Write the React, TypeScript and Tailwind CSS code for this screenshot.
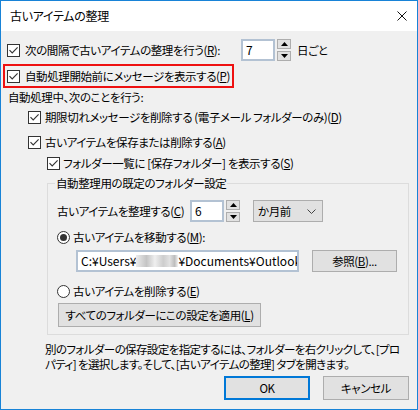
import React from "react";

const Check = () => (
  <span className="w-[13px] h-[13px] border border-[#333333] bg-white flex items-center justify-center shrink-0">
    <svg width="11" height="11" viewBox="0 0 11 11">
      <path d="M1.5 5.2 L4.2 8 L9.6 2.4" fill="none" stroke="#333333" strokeWidth="1.1" />
    </svg>
  </span>
);

const Radio = ({ on }: { on?: boolean }) => (
  <span className="w-[13px] h-[13px] rounded-full border border-[#333333] bg-white flex items-center justify-center shrink-0">
    {on ? <span className="w-[7px] h-[7px] rounded-full bg-[#333333]" /> : null}
  </span>
);

const Spin = () => (
  <div className="flex flex-col gap-[2px] ml-[2px]">
    <div className="w-[14px] h-[10px] border border-[#adadad] bg-[#e1e1e1] flex items-center justify-center">
      <svg width="7" height="4" viewBox="0 0 7 4">
        <path d="M0 4 L3.5 0 L7 4Z" fill="#000" />
      </svg>
    </div>
    <div className="w-[14px] h-[10px] border border-[#adadad] bg-[#e1e1e1] flex items-center justify-center">
      <svg width="7" height="4" viewBox="0 0 7 4">
        <path d="M0 0 L3.5 4 L7 0Z" fill="#000" />
      </svg>
    </div>
  </div>
);

const NumBox = ({ v }: { v: string }) => (
  <div className="w-[34px] h-[22px] border-2 border-[#b3c2d3] bg-white flex items-center pl-[3px] shrink-0 text-[12px]">
    {v}
  </div>
);

export default function App() {
  return (
    <div className="w-[418px] h-[410px] border border-[#1883d7] bg-[#f0f0f0] flex flex-col text-[11.5px] tracking-[-0.4px] leading-[16px] text-black font-['Noto_Sans_CJK_JP',sans-serif] [font-feature-settings:'palt'] overflow-hidden">
      {/* title bar */}
      <div className="h-[30px] bg-white flex items-center justify-between pl-[9px] pr-[10px] shrink-0">
        <span className="text-[12px] tracking-[-0.3px]">古いアイテムの整理</span>
        <svg width="10" height="10" viewBox="0 0 10 10">
          <path d="M0.5 0.5 L9.5 9.5 M9.5 0.5 L0.5 9.5" stroke="#111" strokeWidth="1" />
        </svg>
      </div>

      {/* body */}
      <div className="flex-1 flex flex-col pl-[6px] pr-[8px] pt-[8px]">
        <div className="flex items-center h-[22px]">
          <div className="w-[234px] flex items-center">
            <Check />
            <span className="ml-[5px] whitespace-nowrap">
              次の間隔で古いアイテムの整理を行う(<u>R</u>):
            </span>
          </div>
          <NumBox v="7" />
          <Spin />
          <span className="ml-[6px]">日ごと</span>
        </div>

        <div className="mt-[3px] h-[24px] w-[231px] -ml-[4px] border-2 border-[#ee1111] flex items-center pl-[2px]">
          <Check />
          <span className="ml-[5px] whitespace-nowrap">
            自動処理開始前にメッセージを表示する(<u>P</u>)
          </span>
        </div>

        <div className="mt-[1px] h-[16px] flex items-center pl-[1px] whitespace-nowrap">
          自動処理中、次のことを行う:
        </div>

        <div className="mt-[4px] h-[16px] flex items-center pl-[21px]">
          <Check />
          <span className="ml-[4px] whitespace-nowrap">
            期限切れメッセージを削除する (電子メール フォルダーのみ)(<u>D</u>)
          </span>
        </div>

        <div className="mt-[9px] h-[16px] flex items-center pl-[21px]">
          <Check />
          <span className="ml-[4px] whitespace-nowrap">
            古いアイテムを保存または削除する(<u>A</u>)
          </span>
        </div>

        <div className="mt-[5px] h-[16px] flex items-center pl-[40px]">
          <Check />
          <span className="ml-[3px] whitespace-nowrap">
            フォルダー一覧に [保存フォルダー] を表示する(<u>S</u>)
          </span>
        </div>

        {/* group box */}
        <div className="mt-[12px] ml-[40px] relative border border-[#dcdcdc] pt-[16px] pl-[9px] pb-[7px] flex flex-col">
          <span className="absolute top-[-9px] left-[7px] px-[1px] bg-[#f0f0f0] whitespace-nowrap">
            自動整理用の既定のフォルダー設定
          </span>

          <div className="h-[22px] flex items-center">
            <span className="w-[133px] whitespace-nowrap">
              古いアイテムを整理する(<u>C</u>)
            </span>
            <NumBox v="6" />
            <Spin />
            <div className="ml-[13px] w-[70px] h-[22px] border border-[#adadad] bg-[#e1e1e1] flex items-center justify-between pl-[4px] pr-[6px]">
              <span>か月前</span>
              <svg width="9" height="5" viewBox="0 0 9 5">
                <path d="M0.5 0.5 L4.5 4.5 L8.5 0.5" fill="none" stroke="#444" strokeWidth="1" />
              </svg>
            </div>
          </div>

          <div className="mt-[7px] h-[16px] flex items-center">
            <Radio on />
            <span className="ml-[3px] whitespace-nowrap">
              古いアイテムを移動する(<u>M</u>):
            </span>
          </div>

          <div className="mt-[5px] h-[22px] flex items-center pl-[19px]">
            <div className="w-[223px] h-[22px] border-2 border-[#b3c2d3] bg-white flex items-center pl-[3px] overflow-hidden whitespace-nowrap shrink-0 text-[12px] tracking-[0px]">
              <span>C:¥Users¥</span>
              <span className="inline-block w-[42px] h-[12px] shrink-0 bg-[linear-gradient(90deg,#ececec,#c4c4c4_25%,#efefef_45%,#cdcdcd_65%,#e2e2e2_80%,#bdbdbd_92%,#f4f4f4)]" />
              <span>¥Documents¥Outlook</span>
            </div>
            <div className="ml-[13px] w-[85px] h-[22px] border border-[#adadad] bg-[#e1e1e1] flex items-center justify-center whitespace-nowrap">
              参照(<u>B</u>)...
            </div>
          </div>

          <div className="mt-[11px] h-[16px] flex items-center">
            <Radio />
            <span className="ml-[3px] whitespace-nowrap">
              古いアイテムを削除する(<u>E</u>)
            </span>
          </div>

          <div className="mt-[4px] ml-[1px] w-[203px] h-[24px] border border-[#adadad] bg-[#e1e1e1] flex items-center justify-center whitespace-nowrap">
            すべてのフォルダーにこの設定を適用(<u>L</u>)
          </div>
        </div>

        <div className="mt-[7px] pl-[38px] leading-[15px] whitespace-nowrap tracking-[-0.6px]">
          別のフォルダーの保存設定を指定するには、フォルダーを右クリックして、[プロ
          <br />
          パティ] を選択します。そして、[古いアイテムの整理] タブを開きます。
        </div>

        <div className="mt-[4px] flex justify-end gap-[13px]">
          <div className="w-[86px] h-[24px] border-2 border-[#0078d7] bg-[#e1e1e1] flex items-center justify-center">
            OK
          </div>
          <div className="w-[86px] h-[24px] border border-[#adadad] bg-[#e1e1e1] flex items-center justify-center">
            キャンセル
          </div>
        </div>
      </div>
    </div>
  );
}
